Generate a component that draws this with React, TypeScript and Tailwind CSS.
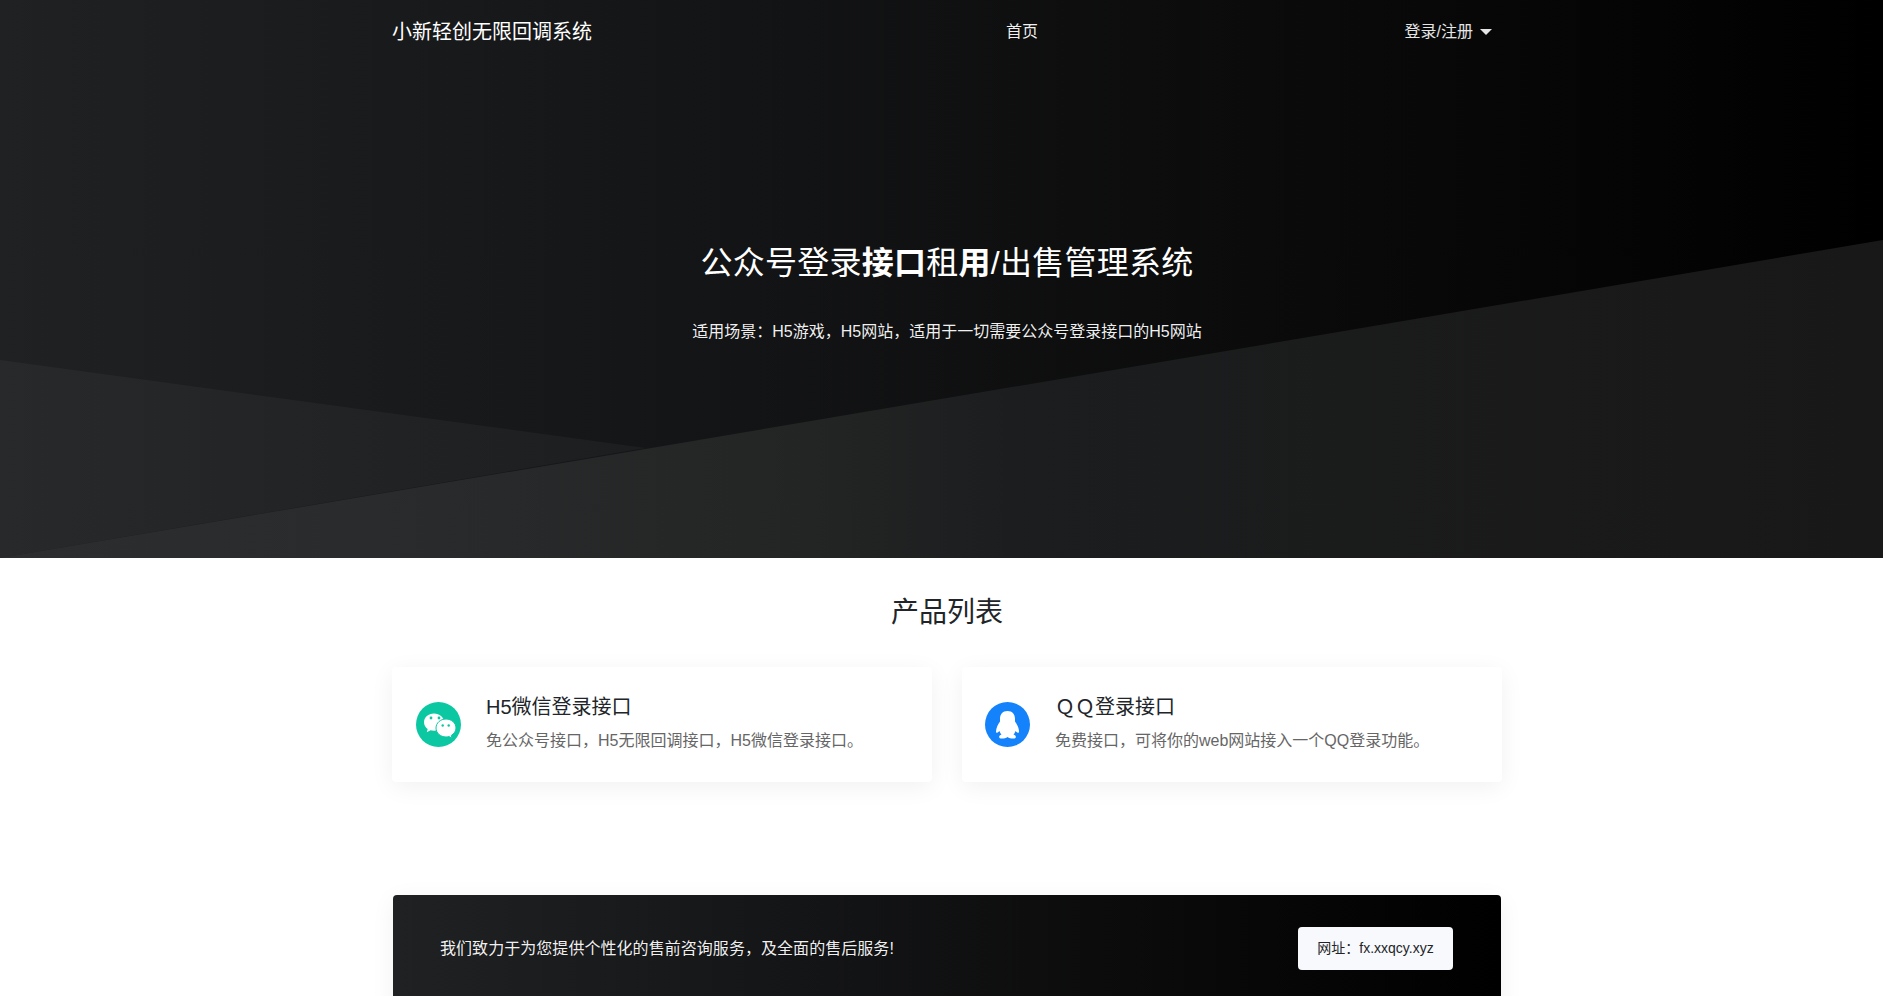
const products = [
  {
    title: "H5微信登录接口",
    desc: "免公众号接口，H5无限回调接口，H5微信登录接口。",
    icon: <WechatIcon />,
    pad: "pl-[24px]",
  },
  {
    title: "ＱＱ登录接口",
    desc: "免费接口，可将你的web网站接入一个QQ登录功能。",
    icon: <QqIcon />,
    pad: "pl-[23px]",
  },
];

export default function App() {
  return (
    <div className="h-screen overflow-hidden bg-white [font-family:'Liberation_Sans','Noto_Sans_CJK_SC',sans-serif] text-[16px]">
      <header className="relative h-[558px] overflow-hidden bg-linear-to-r/srgb from-[#202123] to-[#000000]">
        {/* background wedges */}
        <div className="absolute inset-0 bg-white/[0.035] [clip-path:polygon(0_360px,645px_448px,0_558px)]" />
        <div className="absolute inset-0 bg-[linear-gradient(to_right,#2c2d2e_0%,#2a2b2c_20%,#232424_43%,#1c1d1e_54%,#181818_100%)] [clip-path:polygon(0_558px,1883px_240px,1883px_558px)]" />

        <div className="relative ml-[392px] w-[1110px]">
          <nav className="flex h-[64px] items-center text-white">
            <a className="w-[614px] text-[20px]">小新轻创无限回调系统</a>
            <a className="flex-1 text-[16px] text-white/95">首页</a>
            <a className="flex items-center gap-[7px] pr-[10px] text-[16px] text-white/90">
              登录/注册
              <span className="h-0 w-0 border-x-[6px] border-t-[6px] border-x-transparent border-t-white/90" />
            </a>
          </nav>

          <div className="pt-[173px] text-center text-white">
            <h1 className="text-[32px] leading-[52px] font-normal tracking-[0.25px]">
              公众号登录<b className="font-bold">接口</b>租<b className="font-bold">用</b>/出售管理系统
            </h1>
            <p className="mt-[31px] text-[16px] leading-[24px] text-white/95">
              适用场景：H5游戏，H5网站，适用于一切需要公众号登录接口的H5网站
            </p>
          </div>
        </div>
      </header>

      <main className="ml-[392px] w-[1110px]">
        <h2 className="pt-[33px] text-center text-[28px] leading-[44px] font-normal text-[#212529]">产品列表</h2>

        <div className="mt-[32px] grid grid-cols-2 gap-[30px]">
          {products.map((p) => (
            <div
              key={p.title}
              className={`flex h-[115px] items-center rounded-[4px] bg-white shadow-[0_5px_25px_rgba(0,0,0,0.06)] ${p.pad}`}
            >
              {p.icon}
              <div className="ml-[25px] pb-[5px]">
                <h3 className="text-[20px] leading-[30px] font-normal text-[#212529]">{p.title}</h3>
                <p className="mt-[7px] text-[16px] leading-[24px] text-[#666666]">{p.desc}</p>
              </div>
            </div>
          ))}
        </div>

        <section className="mx-[1px] mt-[113px] flex h-[130px] items-start justify-between rounded-[4px] bg-linear-to-r/srgb from-[#202123] to-[#000000] pt-[32px] pr-[48px] pl-[47px] shadow-[0_5px_25px_rgba(0,0,0,0.06)]">
          <p className="text-[16px] leading-[43px] tracking-[0.05px] text-white/95">
            我们致力于为您提供个性化的售前咨询服务，及全面的售后服务!
          </p>
          <a className="flex h-[43px] w-[155px] items-center justify-center rounded-[4px] bg-[#f8f9fc] text-[14px] text-[#212529]">
            网址：fx.xxqcy.xyz
          </a>
        </section>
      </main>
    </div>
  );
}

function WechatIcon() {
  return (
    <svg viewBox="0 0 45 45" className="h-[45px] w-[45px] shrink-0">
      <circle cx="22.5" cy="22.5" r="22.5" fill="#0bc8a2" />
      <path
        d="M18 11.5c-5.600 0-10 3.900-10 8.800 0 2.800 1.400 5.200 3.700 6.800l-.9 3.200 3.700-2c1 .3 2.100.5 3.500.5 5.500 0 10-3.900 10-8.800s-4.500-8.500-10-8.500z"
        fill="#fff"
      />
      <path
        d="M30 17c-5.500 0-10 3.900-10 9s4.500 9 10 9c1 0 2-.1 3-.4l3 1.700-.7-2.900c2.800-1.600 4.700-4.300 4.700-7.400 0-5.100-4.500-9-10-9z"
        fill="#fff"
        stroke="#0bc8a2"
        strokeWidth="1"
      />
      <circle cx="15" cy="16" r="1.4" fill="#0bc8a2" />
      <circle cx="23" cy="16" r="1.4" fill="#0bc8a2" />
      <circle cx="26.700" cy="23.500" r="1.2" fill="#0bc8a2" />
      <circle cx="32.700" cy="23.500" r="1.2" fill="#0bc8a2" />
    </svg>
  );
}

function QqIcon() {
  return (
    <svg viewBox="0 0 45 45" className="h-[45px] w-[45px] shrink-0">
      <circle cx="22.5" cy="22.5" r="22.5" fill="#1482fb" />
      <path
        d="M22.5 9C17.5 9 15 12.500 15 17V19.500C13 22.500 11 26 11 29.500C11 31.500 12.500 31 14.500 29C15 30.500 15.500 31.500 16.500 32.500C13.500 33.500 13 36.500 17 36.500C19 36.500 21 36 22.500 35C24 36 26 36.500 28 36.500C32 36.500 31.500 33.500 28.500 32.500C29.500 31.500 30 30.500 30.500 29C32.500 31 34 31.500 34 29.500C34 26 32 22.500 30 19.500V17C30 12.500 27.500 9 22.500 9Z"
        fill="#fff"
      />
    </svg>
  );
}
